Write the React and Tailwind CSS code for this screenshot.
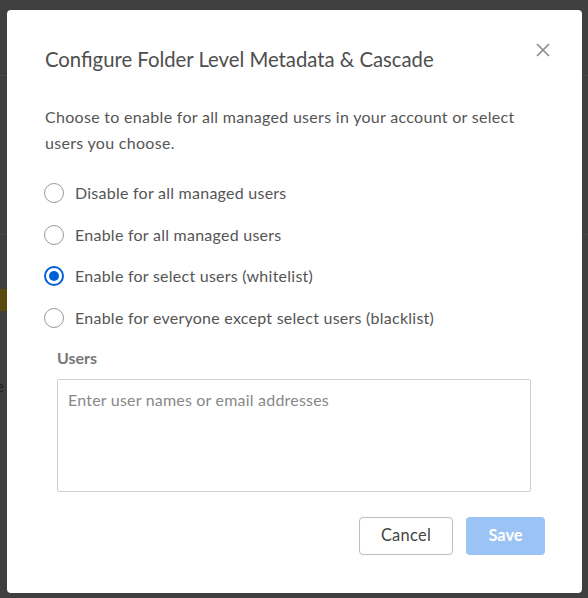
import React, { useState } from 'react'

const options = [
  'Disable for all managed users',
  'Enable for all managed users',
  'Enable for select users (whitelist)',
  'Enable for everyone except select users (blacklist)',
]

function Radio({ checked }) {
  return (
    <span
      className={
        checked
          ? 'flex h-[20px] w-[20px] shrink-0 items-center justify-center rounded-full border-2 border-[#0061d5] bg-white'
          : 'flex h-[20px] w-[20px] shrink-0 items-center justify-center rounded-full border border-[#999] bg-white'
      }
    >
      {checked && <span className="h-[10px] w-[10px] rounded-full bg-[#0061d5]" />}
    </span>
  )
}

export default function App() {
  const [selected, setSelected] = useState(2)

  return (
    <div
      className="relative h-[598px] w-[588px] overflow-hidden bg-[#3f3f3f] pl-[7px] pt-[10px]"
      style={{ fontFamily: 'Lato, "Open Sans", sans-serif' }}
    >
      {/* page behind the backdrop */}
      <div className="absolute left-0 top-[75px] h-px w-[588px] bg-[#4a4a4a]" />
      <div className="absolute left-0 top-[234px] h-px w-[588px] bg-[#4a4a4a]" />
      <div className="absolute left-0 top-[289px] h-[22px] w-[7px] bg-[#5a4a10]" />
      <div className="absolute left-[-4px] top-[375px] text-[15px] text-[#222]">e</div>

      <div className="relative flex h-[583px] w-[575px] flex-col rounded-[4px] bg-white px-[38px] pt-[35px]">
        <div className="flex items-start justify-between">
          <h2 className="text-[20.3px] leading-[28px] text-[#4e4e4e]">
            Configure Folder Level Metadata &amp; Cascade
          </h2>
          <button className="mr-[-7px] mt-[-3px] text-[#8a8a8a]">
            <svg width="16" height="16" viewBox="0 0 16 16" fill="none">
              <path d="M2 2L14 14M14 2L2 14" stroke="currentColor" strokeWidth="1.6" />
            </svg>
          </button>
        </div>

        <p className="mt-[31px] text-[16px] leading-[26px] tracking-[0.3px] text-[#555]">
          Choose to enable for all managed users in your account or select users you choose.
        </p>

        <div className="ml-[-1px] mt-[16px] flex flex-col">
          {options.map((label, i) => (
            <label
              key={label}
              className="flex h-[41.7px] cursor-pointer items-center gap-[11px] text-[16px] tracking-[0.25px] text-[#555]"
              onClick={() => setSelected(i)}
            >
              <Radio checked={selected === i} />
              <span>{label}</span>
            </label>
          ))}
        </div>

        <div className="ml-[12px] mr-[13px] mt-[9px] flex flex-col">
          <span className="text-[16px] font-bold leading-[20px] text-[#777]">Users</span>
          <textarea
            className="mt-[11px] h-[113px] resize-none rounded-[2px] border border-[#cfcfcf] px-[10px] py-[10px] text-[16px] leading-[20px] tracking-[0.2px] text-[#333] placeholder:text-[#888] focus:outline-none"
            placeholder="Enter user names or email addresses"
          />
        </div>

        <div className="mr-[-1px] mt-[25px] flex justify-end gap-[13px]">
          <button className="h-[38px] w-[94px] rounded-[4px] border border-[#bdbdbd] bg-white text-[16.4px] tracking-[0.3px] text-[#444]">
            Cancel
          </button>
          <button className="h-[38px] w-[79px] rounded-[4px] bg-[#9cc3f5] text-[16.4px] font-bold text-white">
            Save
          </button>
        </div>
      </div>
    </div>
  )
}
